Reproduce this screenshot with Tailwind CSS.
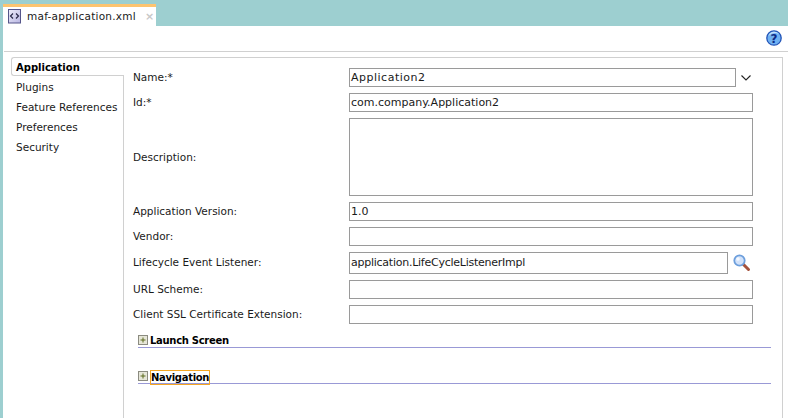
<!DOCTYPE html>
<html lang="en">
<head>
  <meta charset="UTF-8" />
  <title>maf-application.xml</title>
  <script src="https://cdn.jsdelivr.net/npm/@tailwindcss/browser@4"></script>
</head>
<body class="w-[788px] h-[418px] overflow-hidden bg-[#9dcfd0] font-['DejaVu_Sans',sans-serif] text-[10.5px] text-[#1a1a1a] whitespace-nowrap">
  <!-- tab strip -->
  <div class="h-[26px] pl-[3px] pt-[4px]">
    <div class="w-[153px] h-[22px] bg-white border-t-[3px] border-[#fdc46f] flex items-center pl-[5px]">
      <svg width="14" height="15" viewBox="0 0 14 15" class="shrink-0">
        <defs><linearGradient id="fileFill" x1="0" y1="0" x2="1" y2="1"><stop offset="0" stop-color="#eeeefa" /><stop offset="1" stop-color="#b9b6e2" /></linearGradient></defs>
        <rect x="0.5" y="0.5" width="12" height="13.5" fill="url(#fileFill)" stroke="#55558a" />
        <path d="M5 4.5 L2.5 7 L5 9.5 M8 4.5 L10.5 7 L8 9.5" fill="none" stroke="#2a2a4a" stroke-width="1.2" />
      </svg>
      <span class="ml-[5px] tracking-[0.25px]">maf-application.xml</span>
      <span class="ml-[9px] text-[11px] leading-none font-bold text-[#c8c8c8]">×</span>
    </div>
  </div>

  <div class="ml-[3px] h-[392px] bg-white">
    <!-- toolbar -->
    <div class="h-[26px] ml-[1px] border-b border-[#d0d0d0] flex items-center justify-end pr-[6px]">
      <svg width="16" height="16" viewBox="0 0 16 16" class="mb-[1px]">
        <circle cx="8" cy="8" r="7.2" fill="#6fb1f2" stroke="#2254b8" stroke-width="1.3" />
        <path d="M2.5 6 A6 6 0 0 1 13 4 A9 9 0 0 0 2.5 6Z" fill="#c4e1fb" />
        <text x="8" y="12.5" text-anchor="middle" font-size="12" font-weight="700" fill="#0d2a86" font-family="DejaVu Sans">?</text>
      </svg>
    </div>

    <div class="flex pt-[5px] pl-[8px] h-[366px]">
      <!-- side nav -->
      <nav class="w-[113px] shrink-0 flex flex-col">
        <div class="h-[19px] bg-white border border-r-0 border-[#d0d0d0] rounded-l-[3px] font-bold text-[10px] text-black pl-[4px] leading-[19px]">Application</div>
        <div class="grow border-r border-[#d0d0d0] pt-[1px] pl-[5px] flex flex-col leading-[20px]">
          <span>Plugins</span>
          <span>Feature References</span>
          <span>Preferences</span>
          <span>Security</span>
        </div>
      </nav>

      <!-- form panel -->
      <main class="w-[659px] border-t border-r border-[#d0d0d0] pt-[10px] pl-[9px]">
        <div class="grid grid-cols-[216px_404px] gap-y-[6px] items-center">
          <label>Name:*</label>
          <div class="flex items-center">
            <div class="w-[387px] h-[19px] border border-[#9a9a9a] text-[11px] tracking-[0.5px] leading-[17px] pl-px">Application2</div>
            <svg width="10" height="6" viewBox="0 0 10 6" class="ml-[5px]"><path d="M0.5 0.5 L5 5 L9.5 0.5" fill="none" stroke="#222" stroke-width="1.1" /></svg>
          </div>

          <label>Id:*</label>
          <div class="h-[19px] border border-[#9a9a9a] text-[11px] leading-[17px] pl-px">com.company.Application2</div>

          <label class="pt-px">Description:</label>
          <div class="h-[78px] border border-[#9a9a9a]"></div>

          <label>Application Version:</label>
          <div class="h-[19px] border border-[#9a9a9a] text-[11px] leading-[17px] pl-px">1.0</div>

          <label>Vendor:</label>
          <div class="h-[19px] border border-[#9a9a9a]"></div>

          <label>Lifecycle Event Listener:</label>
          <div class="flex items-center h-[22px]">
            <div class="w-[379px] h-[22px] border border-[#9a9a9a] text-[11px] tracking-[-0.25px] leading-[20px] pl-px">application.LifeCycleListenerImpl</div>
            <svg width="18" height="18" viewBox="0 0 18 18" class="ml-[5px]">
              <path d="M10 10 L15.5 15.5" stroke="#a5523c" stroke-width="3" stroke-linecap="round" />
              <circle cx="6.5" cy="6.5" r="5.2" fill="#d2e2fa" stroke="#6d9fdc" stroke-width="1.8" />
              <circle cx="5" cy="5" r="1.8" fill="#f5f9ff" />
            </svg>
          </div>

          <label>URL Scheme:</label>
          <div class="h-[19px] border border-[#9a9a9a]"></div>

          <label>Client SSL Certificate Extension:</label>
          <div class="h-[19px] border border-[#9a9a9a]"></div>
        </div>

        <!-- collapsed sections -->
        <section class="mt-[9px] ml-[5px] w-[633px] h-[15px] border-b border-[#9999d6] flex items-center font-bold text-[10px] text-black">
          <svg width="10" height="10" viewBox="0 0 10 10" class="shrink-0"><rect x="0.5" y="0.5" width="9" height="9" fill="#e6e6d8" stroke="#8b8b80" /><path d="M5 2.5 V7.5 M2.5 5 H7.5" stroke="#5c6b1f" /></svg>
          <span class="ml-[2px] tracking-[-0.3px] pt-px">Launch Screen</span>
        </section>
        <section class="mt-[21px] ml-[5px] w-[633px] h-[15px] border-b border-[#9999d6] flex items-center font-bold text-[10px] text-black">
          <svg width="10" height="10" viewBox="0 0 10 10" class="shrink-0"><rect x="0.5" y="0.5" width="9" height="9" fill="#e6e6d8" stroke="#8b8b80" /><path d="M5 2.5 V7.5 M2.5 5 H7.5" stroke="#5c6b1f" /></svg>
          <span class="block self-start mt-px ml-[2px] w-[60px] h-[15px] border border-[#f5a623] tracking-[-0.3px] leading-[13px]">Navigation</span>
        </section>
      </main>
    </div>
  </div>
</body>
</html>
